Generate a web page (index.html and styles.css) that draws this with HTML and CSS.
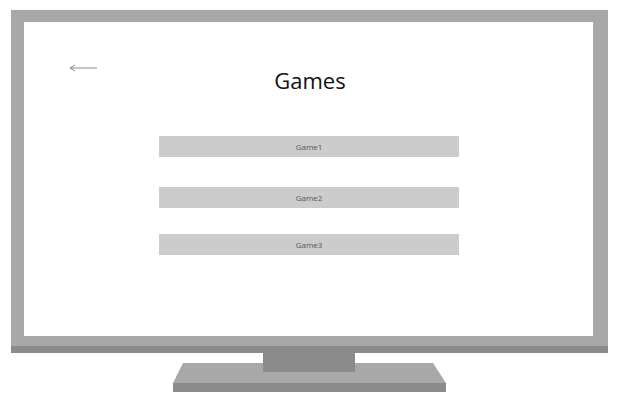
FILE: index.html
```html
<!DOCTYPE html>
<html lang="en">
<head>
  <meta charset="UTF-8">
  <meta name="viewport" content="width=device-width, initial-scale=1.0">
  <title>Games</title>
  <link rel="stylesheet" href="styles.css">
</head>
<body>
  <div class="monitor">
    <div class="bezel">
      <div class="screen">
        <div class="header">
          <a class="back" href="#" aria-label="Back">
            <svg width="28" height="8" viewBox="0 0 28 8">
              <path d="M1 4 H28 M6 1 L1 4 L6 7" fill="none" stroke="#8a8a8a" stroke-width="1"/>
            </svg>
          </a>
          <h1>Games</h1>
          <span></span>
        </div>
        <div class="game-list">
          <button class="game">Game1</button>
          <button class="game">Game2</button>
          <button class="game">Game3</button>
        </div>
      </div>
    </div>
    <!-- neck and base of the stand -->
    <svg class="stand" width="273" height="39" viewBox="0 0 273 39">
      <polygon points="10,10 260,10 273,30 0,30" fill="#a8a8a8"/>
      <rect x="0" y="30" width="273" height="9" fill="#8b8b8b"/>
      <rect x="90" y="0" width="92" height="19" fill="#8b8b8b"/>
    </svg>
  </div>
</body>
</html>
```

FILE: styles.css
```css
body {
  margin: 0;
  background-color: #fff;
  font-family: "Open Sans", "Noto Sans", sans-serif;
}

.monitor {
  width: 597px;
  margin: 10px 0 0 11px;
  display: flex;
  flex-direction: column;
  align-items: center;
}

.bezel {
  width: 100%;
  box-sizing: border-box;
  background-color: #a8a8a8;
  padding: 12px 15px 10px 13px;
  border-bottom: 7px solid #8b8b8b;
}

.screen {
  height: 314px;
  background-color: #fff;
  padding-top: 43px;
  box-sizing: border-box;
}

.header {
  display: grid;
  grid-template-columns: 1fr auto 1fr;
}

.back {
  justify-self: start;
  align-self: start;
  margin: -1px 0 0 45px;
  line-height: 0;
}

h1 {
  margin: 0 0 0 3px;
  font-size: 22px;
  font-weight: 400;
  line-height: 30px;
  color: #111;
}

.game-list {
  display: flex;
  flex-direction: column;
  align-items: center;
  gap: 28px;
  margin-top: 41px;
}

.game {
  width: 300px;
  height: 21px;
  margin-left: 1px;
  border: none;
  background-color: #cccccc;
  font-family: "Open Sans", "Noto Sans", sans-serif;
  font-size: 8px;
  color: #555;
  padding: 0;
}

.game:nth-child(2) {
  margin-top: 2px;
}

.game:nth-child(3) {
  margin-top: -2px;
}

.stand {
  display: block;
  margin-left: 0;
}
```
